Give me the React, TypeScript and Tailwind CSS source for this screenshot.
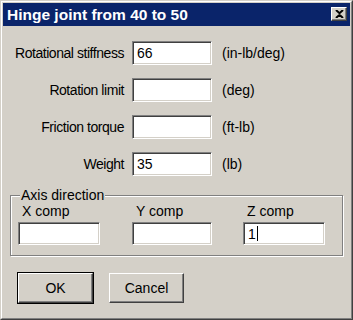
const sunken =
  'h-[23px] bg-white border border-t-[#808080] border-l-[#808080] border-r-white border-b-white shadow-[inset_1px_1px_0_#404040,inset_-1px_-1px_0_#d4d0c8] pl-[4px] flex items-center text-[14px] leading-none text-black';

const raised =
  'h-[30px] w-[75px] bg-[#d4d0c8] border border-t-white border-l-white border-r-[#404040] border-b-[#404040] shadow-[inset_-1px_-1px_0_#808080] flex items-center justify-center text-[14px] text-black';

function Field({ label, value, unit }: { label: string; value?: string; unit: string }) {
  return (
    <div className="flex items-center h-[24px]">
      <div className="w-[114px] text-right text-[14px] leading-none whitespace-nowrap tracking-[-0.45px]">{label}</div>
      <div className={`${sunken} ml-[8px] w-[80px] h-[24px]`}>{value}</div>
      <div className="ml-[10px] text-[14px] leading-none">{unit}</div>
    </div>
  );
}

function Comp({ label, value, caret, w }: { label: string; value?: string; caret?: boolean; w: string }) {
  return (
    <div className={`flex flex-col ${w}`}>
      <div className="pl-[4px] h-[16px] leading-[16px] text-[14px]">{label}</div>
      <div className={`${sunken} mt-[3px]`}>
        {value}
        {caret && <span className="inline-block w-[1px] h-[15px] bg-black ml-[1px]" />}
      </div>
    </div>
  );
}

export default function App() {
  return (
    <div
      className="w-[353px] h-[320px] bg-[#d4d0c8] border border-t-[#d4d0c8] border-l-[#d4d0c8] border-r-[#404040] border-b-[#404040] text-black"
      style={{ fontFamily: '"Liberation Sans", Arial, sans-serif' }}
    >
      <div className="h-full border border-t-white border-l-white border-r-[#808080] border-b-[#808080] p-[1px] flex flex-col">
        {/* title bar */}
        <div className="h-[23px] bg-[#0a246a] flex items-center justify-between pl-[4px] pr-[3px]">
          <div className="text-white font-bold text-[15.5px] leading-none">Hinge joint from 40 to 50</div>
          <div className="w-[16px] h-[14px] mb-[2px] bg-[#d4d0c8] border border-t-white border-l-white border-r-[#404040] border-b-[#404040] shadow-[inset_-1px_-1px_0_#808080] flex items-center justify-center">
            <svg width="9" height="8" viewBox="0 0 9 8">
              <path d="M1 0 L4.5 3.2 L8 0 M1 8 L4.5 4.8 L8 8" stroke="#000" strokeWidth="2" fill="none" />
            </svg>
          </div>
        </div>

        <div className="px-[7px] pt-[15px]">
          <div className="flex flex-col gap-[13px]">
            <Field label="Rotational stiffness" value="66" unit="(in-lb/deg)" />
            <Field label="Rotation limit" unit="(deg)" />
            <Field label="Friction torque" unit="(ft-lb)" />
            <Field label="Weight" value="35" unit="(lb)" />
          </div>

          <fieldset className="mt-[11px] w-[333px] border border-[#808080] shadow-[1px_1px_0_#fff,inset_1px_1px_0_#fff] pl-[7px] pb-[10px]">
            <legend className="ml-[2px] px-[1px] bg-[#d4d0c8] text-[14px] leading-[16px]">Axis direction</legend>
            <div className="flex">
              <Comp label="X comp" w="w-[82px]" />
              <Comp label="Y comp" w="w-[80px] ml-[32px]" />
              <Comp label="Z comp" value="1" caret w="w-[82px] ml-[31px]" />
            </div>
          </fieldset>

          <div className="flex mt-[17px] pl-[8px] gap-[16px]">
            <div className={`${raised} outline outline-1 outline-black`}>OK</div>
            <div className={raised}>Cancel</div>
          </div>
        </div>
      </div>
    </div>
  );
}
